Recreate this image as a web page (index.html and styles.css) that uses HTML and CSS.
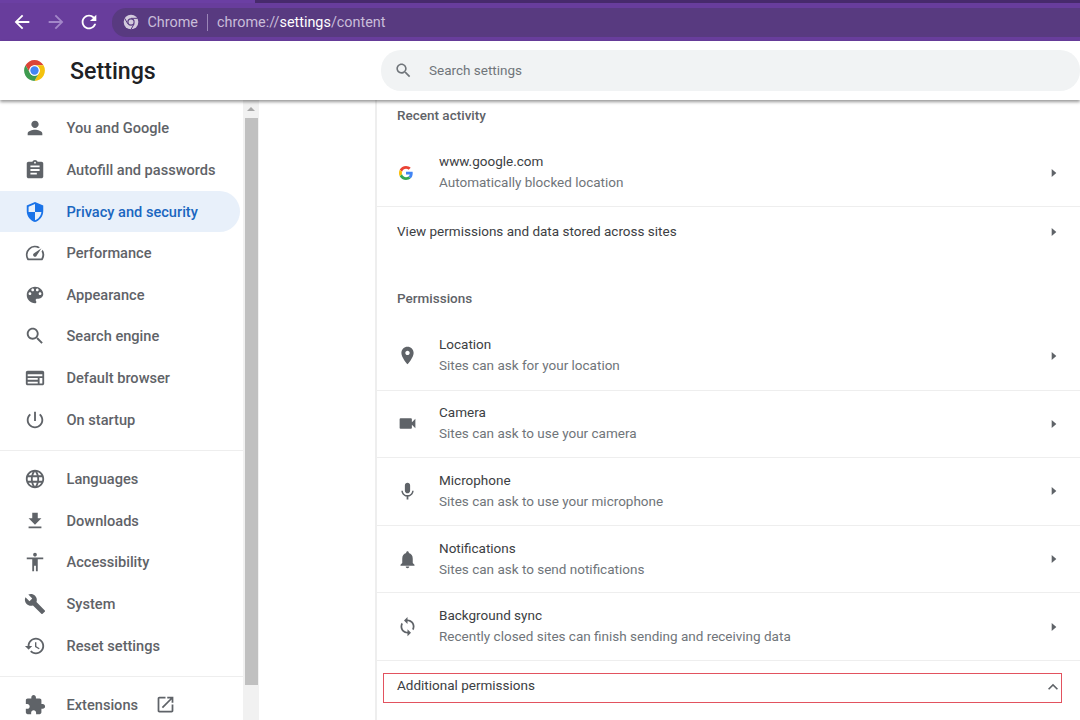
FILE: index.html
```html
<!DOCTYPE html>
<html lang="en">
<head>
    <meta charset="UTF-8">
    <meta name="viewport" content="width=device-width, initial-scale=1.0">
    <title>Settings</title>
    <link rel="stylesheet" href="styles.css">
</head>
<body>

<!-- Browser toolbar -->
<div class="tab-strip"><div class="tab-active"></div></div>
<div class="toolbar">
    <svg class="tool-icon" viewBox="0 0 24 24"><path d="M20 11H7.83l5.59-5.59L12 4l-8 8 8 8 1.41-1.41L7.83 13H20v-2z"/></svg>
    <svg class="tool-icon tool-off" viewBox="0 0 24 24"><path d="M4 13h12.17l-5.59 5.59L12 20l8-8-8-8-1.41 1.41L16.17 11H4v2z"/></svg>
    <svg class="tool-icon" viewBox="0 0 24 24"><path d="M17.65 6.35C16.2 4.9 14.21 4 12 4c-4.42 0-7.99 3.58-7.99 8s3.57 8 7.99 8c3.73 0 6.84-2.55 7.73-6h-2.08c-.82 2.33-3.04 4-5.65 4-3.31 0-6-2.69-6-6s2.69-6 6-6c1.66 0 3.14.69 4.22 1.78L13 11h7V4l-2.35 2.35z"/></svg>
    <div class="omnibox">
        <svg class="omni-icon" viewBox="0 0 48 48">
            <circle cx="24" cy="24" r="22" fill="#d3cbdd"/>
            <circle cx="24" cy="24" r="11" fill="#583a80"/>
            <circle cx="24" cy="24" r="7.5" fill="#d3cbdd"/>
            <path d="M24 13H44M14.5 29.5L5 13M33.5 29.5L24 46" stroke="#583a80" stroke-width="3" fill="none"/>
        </svg>
        <span class="omni-name">Chrome</span>
        <span class="omni-sep"></span>
        <span class="omni-url">chrome://<b>settings</b>/content</span>
    </div>
</div>

<!-- Settings header -->
<div class="header">
    <div class="brand">
        <svg class="logo" viewBox="0 0 48 48">
            <path fill="#db4437" d="M6.68 14A20 20 0 0 1 41.32 14H24A10 10 0 0 0 15.34 29z"/>
            <path fill="#f4c20d" d="M41.32 14A20 20 0 0 1 24 44L32.66 29A10 10 0 0 0 24 14z"/>
            <path fill="#3e9b4f" d="M24 44A20 20 0 0 1 6.68 14L15.34 29A10 10 0 0 0 32.66 29z"/>
            <circle cx="24" cy="24" r="10" fill="#fff"/>
            <circle cx="24" cy="24" r="8" fill="#4285f4"/>
        </svg>
        <span class="title">Settings</span>
    </div>
    <div class="search">
        <svg class="search-icon" viewBox="0 0 24 24"><path d="M15.5 14h-.79l-.28-.27C15.41 12.59 16 11.11 16 9.5 16 5.91 13.09 3 9.5 3S3 5.91 3 9.5 5.91 16 9.5 16c1.61 0 3.09-.59 4.23-1.57l.27.28v.79l5 4.99L20.49 19l-4.99-5zm-6 0C7.01 14 5 11.99 5 9.5S7.01 5 9.5 5 14 7.01 14 9.5 11.99 14 9.5 14z"/></svg>
        <span class="search-text">Search settings</span>
    </div>
</div>

<div class="main">
    <!-- Left menu -->
    <div class="sidebar">
        <div class="nav-item">
            <svg class="nav-icon" viewBox="0 0 24 24"><path d="M12 12c2.21 0 4-1.79 4-4s-1.79-4-4-4-4 1.79-4 4 1.79 4 4 4zm0 2c-2.67 0-8 1.34-8 4v2h16v-2c0-2.66-5.33-4-8-4z"/></svg>
            You and Google
        </div>
        <div class="nav-item">
            <svg class="nav-icon" viewBox="0 0 24 24"><path d="M19 3h-4.18C14.4 1.84 13.3 1 12 1c-1.3 0-2.4.84-2.82 2H5c-1.1 0-2 .9-2 2v14c0 1.1.9 2 2 2h14c1.1 0 2-.9 2-2V5c0-1.1-.9-2-2-2zm-7 0c.55 0 1 .45 1 1s-.45 1-1 1-1-.45-1-1 .45-1 1-1zm2 14H7v-2h7v2zm3-4H7v-2h10v2zm0-4H7V7h10v2z"/></svg>
            Autofill and passwords
        </div>
        <div class="nav-item nav-active">
            <svg class="nav-icon" viewBox="0 0 24 24"><path d="M12 1L3 5v6c0 5.55 3.84 10.74 9 12 5.16-1.26 9-6.45 9-12V5l-9-4zm0 10.99h7c-.53 4.12-3.28 7.79-7 8.94V12H5V6.3l7-3.11v8.8z"/></svg>
            Privacy and security
        </div>
        <div class="nav-item">
            <svg class="nav-icon" viewBox="0 0 24 24"><path d="M20.38 8.57l-1.23 1.85a8 8 0 0 1-.22 7.58H5.07A8 8 0 0 1 15.58 6.85l1.85-1.23A10 10 0 0 0 3.35 19a2 2 0 0 0 1.72 1h13.85a2 2 0 0 0 1.74-1 10 10 0 0 0-.27-10.44zm-9.79 6.84a2 2 0 0 0 2.83 0l5.66-8.49-8.49 5.66a2 2 0 0 0 0 2.83z"/></svg>
            Performance
        </div>
        <div class="nav-item">
            <svg class="nav-icon" viewBox="0 0 24 24"><path d="M12 3c-4.97 0-9 4.03-9 9s4.03 9 9 9c.83 0 1.5-.67 1.5-1.5 0-.39-.15-.74-.39-1.01-.23-.26-.38-.61-.38-.99 0-.83.67-1.5 1.5-1.5H16c2.76 0 5-2.24 5-5 0-4.42-4.03-8-9-8zm-5.5 9c-.83 0-1.5-.67-1.5-1.5S5.67 9 6.5 9 8 9.67 8 10.5 7.33 12 6.5 12zm3-4C8.67 8 8 7.33 8 6.5S8.67 5 9.5 5s1.5.67 1.5 1.5S10.33 8 9.5 8zm5 0c-.83 0-1.5-.67-1.5-1.5S13.67 5 14.5 5s1.5.67 1.5 1.5S15.33 8 14.5 8zm3 4c-.83 0-1.5-.67-1.5-1.5S16.67 9 17.5 9s1.5.67 1.5 1.5-.67 1.5-1.5 1.5z"/></svg>
            Appearance
        </div>
        <div class="nav-item">
            <svg class="nav-icon" viewBox="0 0 24 24"><path d="M15.5 14h-.79l-.28-.27C15.41 12.59 16 11.11 16 9.5 16 5.91 13.09 3 9.5 3S3 5.91 3 9.5 5.91 16 9.5 16c1.61 0 3.09-.59 4.23-1.57l.27.28v.79l5 4.99L20.49 19l-4.99-5zm-6 0C7.01 14 5 11.99 5 9.5S7.01 5 9.5 5 14 7.01 14 9.5 11.99 14 9.5 14z"/></svg>
            Search engine
        </div>
        <div class="nav-item">
            <svg class="nav-icon" viewBox="0 0 24 24"><path d="M20 4H4c-1.1 0-2 .9-2 2v12c0 1.1.9 2 2 2h16c1.1 0 2-.9 2-2V6c0-1.1-.9-2-2-2zm0 14h-3v-6h3v6zm-5 0H4v-2h11v2zm0-4H4v-2h11v2zM4 10V8h16v2H4z"/></svg>
            Default browser
        </div>
        <div class="nav-item">
            <svg class="nav-icon" viewBox="0 0 24 24"><path d="M13 3h-2v10h2V3zm4.83 2.17l-1.42 1.42C17.99 7.86 19 9.81 19 12c0 3.87-3.13 7-7 7s-7-3.13-7-7c0-2.19 1.01-4.14 2.58-5.42L6.17 5.17C4.23 6.82 3 9.26 3 12c0 4.97 4.03 9 9 9s9-4.03 9-9c0-2.74-1.23-5.18-3.17-6.83z"/></svg>
            On startup
        </div>
        <div class="nav-sep"></div>
        <div class="nav-item">
            <svg class="nav-icon" viewBox="0 0 24 24"><path d="M11.99 2C6.47 2 2 6.48 2 12s4.47 10 9.99 10C17.52 22 22 17.52 22 12S17.52 2 11.99 2zm6.93 6h-2.95c-.32-1.25-.78-2.45-1.38-3.56 1.84.63 3.37 1.91 4.33 3.56zM12 4.04c.83 1.2 1.48 2.53 1.91 3.96h-3.82c.43-1.43 1.08-2.76 1.91-3.96zM4.26 14C4.1 13.36 4 12.69 4 12s.1-1.36.26-2h3.38c-.08.66-.14 1.32-.14 2 0 .68.06 1.34.14 2H4.26zm.82 2h2.95c.32 1.25.78 2.45 1.38 3.56-1.84-.63-3.37-1.9-4.33-3.56zm2.95-8H5.08c.96-1.66 2.49-2.93 4.33-3.56C8.81 5.55 8.35 6.75 8.03 8zM12 19.96c-.83-1.2-1.48-2.53-1.91-3.96h3.82c-.43 1.43-1.08 2.76-1.91 3.96zM14.34 14H9.66c-.09-.66-.16-1.32-.16-2 0-.68.07-1.35.16-2h4.68c.09.65.16 1.32.16 2 0 .68-.07 1.34-.16 2zm.25 5.56c.6-1.11 1.06-2.31 1.38-3.56h2.95c-.96 1.65-2.49 2.93-4.33 3.56zM16.36 14c.08-.66.14-1.32.14-2 0-.68-.06-1.34-.14-2h3.38c.16.64.26 1.31.26 2s-.1 1.36-.26 2h-3.38z"/></svg>
            Languages
        </div>
        <div class="nav-item">
            <svg class="nav-icon" viewBox="0 0 24 24"><path d="M19 9h-4V3H9v6H5l7 7 7-7zM5 18v2h14v-2H5z"/></svg>
            Downloads
        </div>
        <div class="nav-item">
            <svg class="nav-icon" viewBox="0 0 24 24"><path d="M12 2c1.1 0 2 .9 2 2s-.9 2-2 2-2-.9-2-2 .9-2 2-2zm9 7h-6v13h-2v-6h-2v6H9V9H3V7h18v2z"/></svg>
            Accessibility
        </div>
        <div class="nav-item">
            <svg class="nav-icon" viewBox="0 0 24 24"><path d="M22.7 19l-9.1-9.1c.9-2.3.4-5-1.5-6.9-2-2-5-2.4-7.4-1.3L9 6 6 9 1.6 4.7C.4 7.1.9 10.1 2.9 12.1c1.9 1.9 4.6 2.4 6.9 1.5l9.1 9.1c.4.4 1 .4 1.4 0l2.3-2.3c.5-.4.5-1.1.1-1.4z"/></svg>
            System
        </div>
        <div class="nav-item">
            <svg class="nav-icon" viewBox="0 0 24 24"><path d="M13 3c-4.97 0-9 4.03-9 9H1l3.89 3.89.07.14L9 12H6c0-3.87 3.13-7 7-7s7 3.13 7 7-3.13 7-7 7c-1.93 0-3.68-.79-4.94-2.06l-1.42 1.42C8.27 19.99 10.51 21 13 21c4.97 0 9-4.03 9-9s-4.03-9-9-9zm-1 5v5l4.28 2.54.72-1.21-3.5-2.08V8H12z"/></svg>
            Reset settings
        </div>
        <div class="nav-sep nav-sep-low"></div>
        <div class="nav-item">
            <svg class="nav-icon" viewBox="0 0 24 24"><path d="M20.5 11H19V7c0-1.1-.9-2-2-2h-4V3.5C13 2.12 11.88 1 10.5 1S8 2.12 8 3.5V5H4c-1.1 0-1.99.9-1.99 2v3.8H3.5c1.49 0 2.7 1.21 2.7 2.7s-1.21 2.7-2.7 2.7H2V20c0 1.1.9 2 2 2h3.8v-1.5c0-1.49 1.21-2.7 2.7-2.7 1.49 0 2.7 1.21 2.7 2.7V22H17c1.1 0 2-.9 2-2v-4h1.5c1.38 0 2.5-1.12 2.5-2.5S21.88 11 20.5 11z"/></svg>
            Extensions
            <svg class="ext-icon" viewBox="0 0 24 24"><path d="M19 19H5V5h7V3H5c-1.11 0-2 .9-2 2v14c0 1.1.89 2 2 2h14c1.1 0 2-.9 2-2v-7h-2v7zM14 3v2h3.59l-9.83 9.83 1.41 1.41L19 6.41V10h2V3h-7z"/></svg>
        </div>
    </div>

    <!-- Sidebar scrollbar -->
    <div class="scrollbar">
        <div class="scroll-up"></div>
        <div class="scroll-thumb"></div>
    </div>

    <!-- Content panel -->
    <div class="panel">
        <div class="section-title">Recent activity</div>
        <div class="row row-first row-site">
            <svg class="row-favicon" viewBox="0 0 48 48">
                <path fill="#EA4335" d="M24 9.5c3.54 0 6.71 1.22 9.21 3.6l6.85-6.85C35.9 2.38 30.47 0 24 0 14.62 0 6.51 5.38 2.56 13.22l7.98 6.19C12.43 13.72 17.74 9.5 24 9.5z"/>
                <path fill="#4285F4" d="M46.98 24.55c0-1.57-.15-3.09-.38-4.55H24v9.02h12.94c-.58 2.96-2.26 5.48-4.78 7.18l7.73 6c4.51-4.18 7.09-10.36 7.09-17.65z"/>
                <path fill="#FBBC05" d="M10.53 28.59c-.48-1.45-.76-2.99-.76-4.59s.27-3.14.76-4.59l-7.98-6.19C.92 16.46 0 20.12 0 24c0 3.88.92 7.54 2.56 10.78l7.97-6.19z"/>
                <path fill="#34A853" d="M24 48c6.48 0 11.93-2.13 15.89-5.81l-7.73-6c-2.15 1.45-4.92 2.3-8.16 2.3-6.26 0-11.57-4.22-13.47-9.91l-7.98 6.19C6.51 42.62 14.62 48 24 48z"/>
            </svg>
            <div class="row-text">
                <div class="row-label">www.google.com</div>
                <div class="row-sub">Automatically blocked location</div>
            </div>
            <svg class="row-arrow" viewBox="0 0 24 24"><path d="M8 5l8 7-8 7z"/></svg>
        </div>
        <div class="row row-plain">
            <div class="row-text"><div class="row-label">View permissions and data stored across sites</div></div>
            <svg class="row-arrow" viewBox="0 0 24 24"><path d="M8 5l8 7-8 7z"/></svg>
        </div>

        <div class="section-title section-perms">Permissions</div>
        <div class="row row-first">
            <svg class="row-icon" viewBox="0 0 24 24"><path d="M12 2C8.13 2 5 5.13 5 9c0 5.25 7 13 7 13s7-7.75 7-13c0-3.87-3.13-7-7-7zm0 9.5c-1.38 0-2.5-1.12-2.5-2.5s1.12-2.5 2.5-2.5 2.5 1.12 2.5 2.5-1.12 2.5-2.5 2.5z"/></svg>
            <div class="row-text">
                <div class="row-label">Location</div>
                <div class="row-sub">Sites can ask for your location</div>
            </div>
            <svg class="row-arrow" viewBox="0 0 24 24"><path d="M8 5l8 7-8 7z"/></svg>
        </div>
        <div class="row">
            <svg class="row-icon" viewBox="0 0 24 24"><path d="M17 10.5V7c0-.55-.45-1-1-1H4c-.55 0-1 .45-1 1v10c0 .55.45 1 1 1h12c.55 0 1-.45 1-1v-3.5l4 4v-11l-4 4z"/></svg>
            <div class="row-text">
                <div class="row-label">Camera</div>
                <div class="row-sub">Sites can ask to use your camera</div>
            </div>
            <svg class="row-arrow" viewBox="0 0 24 24"><path d="M8 5l8 7-8 7z"/></svg>
        </div>
        <div class="row">
            <svg class="row-icon" viewBox="0 0 24 24"><path d="M12 14c1.66 0 3-1.34 3-3V5c0-1.66-1.34-3-3-3S9 3.34 9 5v6c0 1.66 1.34 3 3 3zm5.3-3c0 3-2.54 5.1-5.3 5.1S6.7 14 6.7 11H5c0 3.41 2.72 6.23 6 6.72V21h2v-3.28c3.28-.48 6-3.3 6-6.72h-1.7z"/></svg>
            <div class="row-text">
                <div class="row-label">Microphone</div>
                <div class="row-sub">Sites can ask to use your microphone</div>
            </div>
            <svg class="row-arrow" viewBox="0 0 24 24"><path d="M8 5l8 7-8 7z"/></svg>
        </div>
        <div class="row">
            <svg class="row-icon" viewBox="0 0 24 24"><path d="M12 22c1.1 0 2-.9 2-2h-4c0 1.1.89 2 2 2zm6-6v-5c0-3.07-1.64-5.64-4.5-6.32V4c0-.83-.67-1.5-1.5-1.5s-1.5.67-1.5 1.5v.68C7.63 5.36 6 7.92 6 11v5l-2 2v1h16v-1l-2-2z"/></svg>
            <div class="row-text">
                <div class="row-label">Notifications</div>
                <div class="row-sub">Sites can ask to send notifications</div>
            </div>
            <svg class="row-arrow" viewBox="0 0 24 24"><path d="M8 5l8 7-8 7z"/></svg>
        </div>
        <div class="row">
            <svg class="row-icon" viewBox="0 0 24 24"><path d="M12 4V1L8 5l4 4V6c3.31 0 6 2.69 6 6 0 1.01-.25 1.97-.7 2.8l1.46 1.46C19.54 15.03 20 13.57 20 12c0-4.42-3.58-8-8-8zm0 14c-3.31 0-6-2.69-6-6 0-1.01.25-1.97.7-2.8L5.24 7.74C4.46 8.97 4 10.43 4 12c0 4.42 3.58 8 8 8v3l4-4-4-4v3z"/></svg>
            <div class="row-text">
                <div class="row-label">Background sync</div>
                <div class="row-sub">Recently closed sites can finish sending and receiving data</div>
            </div>
            <svg class="row-arrow" viewBox="0 0 24 24"><path d="M8 5l8 7-8 7z"/></svg>
        </div>

        <div class="row-divider"></div>
        <div class="additional">
            <span class="row-label">Additional permissions</span>
            <svg class="chevron" viewBox="0 0 24 24"><path d="M7.41 15.41L12 10.83l4.59 4.58L18 14l-6-6-6 6z"/></svg>
        </div>
    </div>
</div>

</body>
</html>
```

FILE: styles.css
```css
* {
    box-sizing: border-box;
}
html, body {
    margin: 0;
    height: 720px;
    overflow: hidden;
}
body {
    display: flex;
    flex-direction: column;
    background-color: #fff;
    font-family: Roboto, "Liberation Sans", sans-serif;
    font-size: 13.5px;
    color: #3c4043;
}

/* Browser toolbar */
.tab-strip {
    height: 3px;
    background-color: #472a6c;
}
.tab-active {
    width: 255px;
    height: 3px;
    background-color: #6b3fa3;
}
.toolbar {
    display: flex;
    align-items: center;
    height: 38px;
    padding: 0 0 0 11px;
    background-color: #683d9c;
}
.tool-icon {
    width: 22px;
    height: 22px;
    margin-right: 11.5px;
    fill: #fff;
}
.tool-off {
    fill: #a387c9;
}
.omnibox {
    display: flex;
    align-items: center;
    flex: 1;
    height: 29px;
    padding-left: 11px;
    background-color: #583a80;
    border-radius: 14px 0 0 14px;
    color: #c9bdd9;
    font-size: 14.4px;
}
.omni-icon {
    width: 16px;
    height: 16px;
    margin-right: 9px;
}
.omni-sep {
    width: 1px;
    height: 17px;
    margin: 0 9px;
    background-color: #9b86b8;
}
.omni-url b {
    color: #fff;
    font-weight: 400;
}

/* Settings header */
.header {
    display: flex;
    align-items: center;
    height: 59px;
    position: relative;
    z-index: 2;
    background-color: #fff;
    box-shadow: 0 2px 3px rgba(0,0,0,0.4);
}
.brand {
    display: flex;
    align-items: center;
    width: 381px;
    padding-left: 22px;
}
.logo {
    width: 25px;
    height: 25px;
    margin-right: 23px;
}
.title {
    font-size: 23.2px;
    font-weight: 500;
    color: #202124;
}
.search {
    display: flex;
    align-items: center;
    flex: 1;
    height: 41px;
    padding-left: 13px;
    background-color: #f1f3f4;
    border-radius: 20px;
    color: #70757a;
}
.search-icon {
    width: 19px;
    height: 19px;
    margin-right: 16px;
    fill: #70757a;
}
.search-text {
    padding-bottom: 2px;
}

/* Main area */
.main {
    display: flex;
    flex: 1;
    min-height: 0;
    overflow: hidden;
}
.sidebar {
    width: 243px;
    padding-top: 7.6px;
}
.nav-item {
    display: flex;
    align-items: center;
    height: 41.6px;
    width: 240px;
    padding-left: 24px;
    border-radius: 0 21px 21px 0;
    font-size: 14.6px;
    font-weight: 500;
    color: #5f6368;
}
.nav-icon {
    width: 22px;
    height: 22px;
    margin-right: 20.5px;
    flex-shrink: 0;
    fill: #5f6368;
}
.nav-active {
    background-color: #e8f0fa;
    color: #1a66c0;
}
.nav-active .nav-icon {
    fill: #1a73e8;
}
.nav-sep {
    width: 243px;
    height: 1px;
    margin: 10px 0 7px;
    background-color: #eee;
}
.nav-sep-low {
    margin: 10px 0 6.4px;
}
.ext-icon {
    width: 21px;
    height: 21px;
    margin-left: 17px;
    fill: #5f6368;
}

/* Sidebar scrollbar */
.scrollbar {
    width: 16px;
    background-color: #f1f1f1;
    padding: 0 1px 0 2px;
}
.scroll-up {
    width: 0;
    height: 0;
    margin: 7px 0 0 2px;
    border: 4px solid transparent;
    border-top: 0;
    border-bottom: 4px solid #a8a8a8;
}
.scroll-thumb {
    height: 567px;
    margin-top: 7px;
    background-color: #c0c0c0;
}

/* Content panel */
.panel {
    flex: 1;
    margin-left: 116px;
    border-left: 2px solid #eee;
}
.section-title {
    height: 32px;
    padding-left: 20px;
    line-height: 30px;
    font-weight: 500;
    color: #5f6368;
}
.section-perms {
    margin-top: 27px;
}
.row {
    display: flex;
    align-items: center;
    height: 67.6px;
    padding: 0 18px 0 20px;
    border-top: 1px solid #eee;
}
.row-first {
    margin-top: 7px;
    border-top: 0;
}
.row-site {
    height: 67px;
}
.row-plain {
    height: 50px;
}
.row-divider {
    height: 1px;
    background-color: #eee;
}
.row-icon {
    width: 21px;
    height: 21px;
    margin-right: 21px;
    flex-shrink: 0;
    fill: #5f6368;
}
.row-favicon {
    width: 14px;
    height: 14px;
    margin: 0 26px 0 2px;
    flex-shrink: 0;
}
.row-text {
    flex: 1;
    padding-bottom: 2px;
}
.row-label {
    color: #3c4043;
    line-height: 20px;
}
.row-sub {
    margin-top: 1px;
    color: #70757a;
    line-height: 20px;
}
.row-arrow {
    width: 14px;
    height: 14px;
    margin-right: 1px;
    fill: #5f6368;
}

/* Highlighted row */
.additional {
    display: flex;
    align-items: center;
    justify-content: space-between;
    width: 679px;
    height: 30px;
    margin: 12px 0 0 6px;
    padding: 0 0 6px 13px;
    border: 1px solid #e2525f;
}
.chevron {
    width: 20px;
    height: 20px;
    margin: 5px -2px 0 0;
    fill: #5f6368;
}
```
